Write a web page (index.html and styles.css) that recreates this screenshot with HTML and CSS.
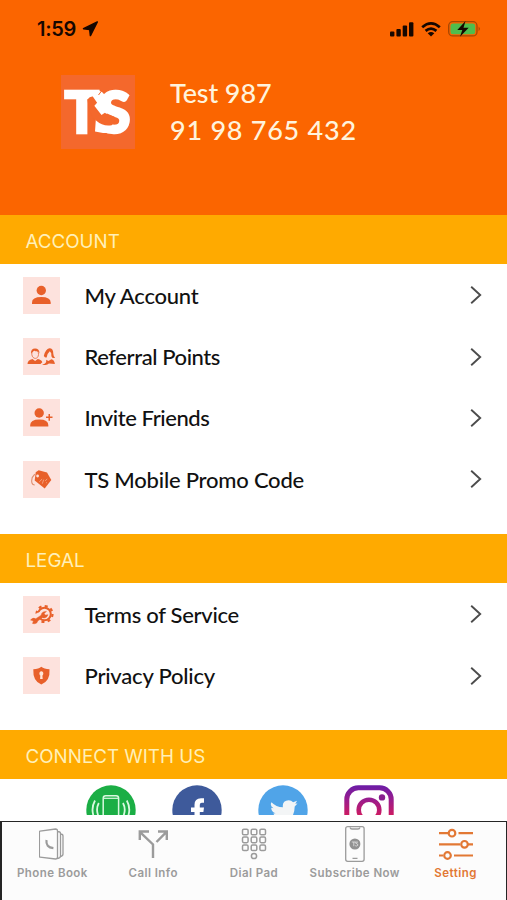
FILE: index.html
```
<!DOCTYPE html>
<html lang="en">
  <head>
    <meta charset="UTF-8">
    <meta name="viewport" content="width=device-width, initial-scale=1.0">
    <title>Setting</title>
    <link rel="stylesheet" href="styles.css">
  </head>
<body>
  <div class="header">
    <div class="status">
      <div class="time">1:59
        <svg width="17" height="16" viewBox="0 0 17 16"><path d="M15.3 1 1.5 7.7l6.2.9.7 6z" fill="#160700" stroke="#160700" stroke-width="1.5" stroke-linejoin="round"/></svg>
      </div>
      <div class="status-icons">
        <svg width="24" height="15" viewBox="0 0 24 15" fill="#160700"><rect y="9.5" width="4.4" height="5" rx="1"/><rect x="6.4" y="7" width="4.4" height="7.5" rx="1"/><rect x="12.7" y="3.5" width="4.4" height="11" rx="1"/><rect x="19" y=".3" width="4.4" height="14.2" rx="1"/></svg>
        <svg width="20" height="15" viewBox="0 0 20 15" fill="none" stroke="#160700" stroke-width="2.7"><path d="M1.2 5.3q8.8-7.7 17.6 0M4.6 8.9q5.4-4.6 10.8 0"/><path d="M6.7 11.2q3.3-2.5 6.6 0L10 14.6z" fill="#160700" stroke="none"/></svg>
        <svg width="33" height="16" viewBox="0 0 33 16"><rect x=".7" y=".7" width="28.3" height="14.2" rx="4" fill="none" stroke="#a64700" stroke-width="1.3"/><rect x="2.5" y="2.4" width="24.7" height="10.9" rx="2.5" fill="#4fbd4c"/><path d="M30.6 5.4q2.6 2.4 0 4.8z" fill="#a64700"/><path d="M17.5 0 9.3 9h5l-2.3 6.7L20.7 6.8h-5.2z" fill="#160700"/></svg>
      </div>
    </div>
    <div class="profile">
      <svg class="logo" width="74" height="74" viewBox="0 0 74 74">
        <rect width="74" height="74" fill="#f4682c"/>
        <text class="logo-text" x="3.5" y="57.5" textLength="66" lengthAdjust="spacingAndGlyphs">TS</text>
        <path d="M28 15.500h10l3 1.500 6 6-.5 13-6 4-7-9-6-6zM35 42l14 5-3 11h-4l-8-1.500z" fill="#fff"/>
        <path d="M26.500 24.500q2.200-3.200 5.300-2.900l4.300 6.200-3.400 3.700q3.300 6.600 9.600 9.800l3.700-2.800 7.400 3.200q1 5-2.700 8.500-8.300 1.800-15.700-4.700-7.500-6.800-8.500-21z" fill="#f4682c"/>
        <path d="M29.500 40v20h4.500V46z" fill="#f4682c"/>
        <path d="m37.500 20 3-4" stroke="#f4682c" stroke-width="1"/>
      </svg>
      <div class="user">
        <div class="name">Test 987</div>
        <div class="phone">91 98 765 432</div>
      </div>
    </div>
  </div>

  <div class="content">
    <h2>ACCOUNT</h2>
    <div class="list">
      <div class="row">
        <svg class="icon" viewBox="0 0 37 37"><circle cx="18.3" cy="13.5" r="4.7"/><path d="M9 27v-1.5q0-5.5 9.3-5.5t9.4 5.5V27z"/></svg>
        <span class="my-account">My Account</span>
        <svg class="arrow" viewBox="0 0 12 18"><path d="m1.2.8 9 8.2-9 8.2"/></svg>
      </div>
      <div class="row">
        <svg class="icon" viewBox="0 0 37 37">
          <path d="M4.5 26q0-3.8 5-5l2.6 2 2.7-2q3.8.8 4.5 3.2L17.5 26z"/>
          <path d="M8.8 16.5c-.8-6 7.3-6.1 6.7 0-.3 5.2-6 5.2-6.7 0z" fill="none" stroke="#e2683a" stroke-width=".8"/>
          <path d="M8 15.5q-.2-5 4.1-5t4.4 5l-1.6-2.2q-2.6.3-3.6-.8z"/>
          <path d="M19 26.5q5-.6 4.2-4.8l2.2 1.4 3-1.8q3 .7 3.5 4.7l-6-.4q-2 2.4-6.9.9z"/>
          <path d="M20.8 18q1.9-7.3 5.5-7.7 4 0 4 5.4.2 3.2 1.8 4.2-3 .7-3.7-1.7.5-3.5-1.6-4.9-2.9 2.6-3.2 6.1-1.3.6-2.8-1.4z"/>
        </svg>
        <span class="referral">Referral Points</span>
        <svg class="arrow" viewBox="0 0 12 18"><path d="m1.2.8 9 8.2-9 8.2"/></svg>
      </div>
      <div class="row">
        <svg class="icon" viewBox="0 0 37 37"><circle cx="16.2" cy="14" r="4.7"/><path d="M7.2 27.5V26q0-5.6 9.1-5.6t9 5.6v1.5zM25.500 15v2.500H23v1.500h2.500v2.700H27V19h2.500v-1.500H27V15z"/></svg>
        <span class="invite">Invite Friends</span>
        <svg class="arrow" viewBox="0 0 12 18"><path d="m1.2.8 9 8.2-9 8.2"/></svg>
      </div>
      <div class="row">
        <svg class="icon" viewBox="0 0 37 37">
          <path d="m12.7 11.2 3-2 8.300 2.200 4.300 7.700-6.600 8.500-10-8.200z"/>
          <path d="m11.8 13.1-2.6 3.5q-1.8 7.2 2.5 7.4" fill="none" stroke="#df8e6e" stroke-width="1.1"/>
          <circle cx="14.6" cy="15" r="1.4" fill="#fde2dd"/>
          <path d="m16.3 20.8 2.8-2.7m.2 4.6 1.4-4.1m1.5 1.2 2-1.8m-1.1 3.5.8.4" fill="none" stroke="#f7ae91" stroke-width=".8"/>
        </svg>
        <span class="promo">TS Mobile Promo Code</span>
        <svg class="arrow" viewBox="0 0 12 18"><path d="m1.2.8 9 8.2-9 8.2"/></svg>
      </div>
    </div>

    <h2>LEGAL</h2>
    <div class="list">
      <div class="row">
        <svg class="icon" viewBox="0 0 37 37">
          <circle cx="21.5" cy="18" r="6.3" fill="none" stroke="#e8602a" stroke-width="2"/>
          <circle cx="21.5" cy="18" r="8" fill="none" stroke="#e8602a" stroke-width="2.2" stroke-dasharray="3 3.28"/>
          <path d="m11 18.5 7-3v7l-6.5 6z" fill="#fde2dd"/>
          <path d="m9.5 27.5.9-2.5-2.9-1q2.3-3 5.3-1.3l5.3-3.5q.3-4 5.4-3.8l-2.3 2.1 1 1.6 2.8-.4q-1.6 4.2-5.6 3l-4.7 3.3q-.7 3.500-5.200 2.500z" stroke="#e8602a" stroke-width=".4"/>
        </svg>
        <span class="terms">Terms of Service</span>
        <svg class="arrow" viewBox="0 0 12 18"><path d="m1.2.8 9 8.2-9 8.2"/></svg>
      </div>
      <div class="row">
        <svg class="icon" viewBox="0 0 37 37"><path d="M10.3 12.2q5.5 0 8-2.4 2.8 2.4 8.2 2.4.9 11.8-8.2 15.2-8.6-3.2-8-15.2z"/><path d="M16.5 17a2 2 0 1 1 3.7 0q0 1-.8 1.6l.3 3.300h-2.600l.2-3.300q-.8-.6-.8-1.600z" fill="#ffe5d8"/></svg>
        <span class="privacy">Privacy Policy</span>
        <svg class="arrow" viewBox="0 0 12 18"><path d="m1.2.8 9 8.2-9 8.2"/></svg>
      </div>
    </div>

    <h2>CONNECT WITH US</h2>
    <div class="social">
      <svg viewBox="0 0 50 50"><circle cx="25" cy="25" r="24.7" fill="#1bae45"/><g fill="none" stroke="#d9f8df" stroke-width="1.5"><rect x="17.2" y="10.7" width="15.4" height="29" rx="2.5"/><path d="M17.5 13.3h15" stroke-width="1.2"/><path d="M12.8 18q-3.5 6.5 0 14M9 15.5q-5 9 0 19M37 18q3.5 6.5 0 14M40.8 15.5q5 9 0 19" stroke-width="1.8"/></g></svg>
      <svg viewBox="0 0 50 50"><circle cx="25" cy="25" r="24.7" fill="#3e5a9b"/><path d="M22.500 40V27H19v-4.600h3.500v-2.600q0-6.600 6.500-6.600h3v4.600h-2.200q-2 0-2 2v2.600H32l-.6 4.600h-3.600v13z" fill="#fff"/></svg>
      <svg viewBox="0 0 50 50"><circle cx="25" cy="25" r="24.7" fill="#50a4e8"/><path d="M13.5 17.3q4.500 4.900 11.400 5-1-6.700 5.800-7 2.700 0 4.400 1.900l4-1.500-1.800 3.100 2.200-.4-2.800 3Q36.500 37 22 37q-5 0-9-2.400 5 0 7.500-2.400-3.900-.3-5.100-3.700l2.200-.2q-4.200-1.300-4.400-5.500l2.300.5q-4-2.800-2-6z" fill="#f3f5f6"/></svg>
      <svg viewBox="0 0 50 50"><defs><linearGradient id="insta" x1="0" y1="0" x2="0" y2="50" gradientUnits="userSpaceOnUse"><stop offset=".03" stop-color="#6e1ca5"/><stop offset=".3" stop-color="#9b1c8c"/><stop offset=".65" stop-color="#d41b5b"/><stop offset="1" stop-color="#f57a38"/></linearGradient></defs><rect x="2.8" y="2.8" width="44.4" height="44.4" rx="11.5" fill="none" stroke="url(#insta)" stroke-width="5"/><circle cx="25" cy="25" r="10.3" fill="none" stroke="url(#insta)" stroke-width="4.6"/><circle cx="38" cy="12.4" r="3.2" fill="#87208d"/></svg>
    </div>
  </div>

  <div class="tabs">
    <div class="tab">
      <svg width="26" height="36" viewBox="0 0 26 36"><path d="M1 5.2 16.5 3q2 0 2 2v26q0 2-2 2L1 31.2q-.6 0-.6-1V6.2q0-.9.6-1zM18.5 5.5q3 0 3 2v22.5q0 2-3 2.5M21.5 8q2.5 0 2.5 2v18q0 2-2.5 2.5"/><path d="M7.5 14q-1 7.400 6.900 8.200" stroke-width="2.2"/></svg>
      Phone Book
    </div>
    <div class="tab">
      <svg class="call-info" width="30" height="36" viewBox="0 0 30 36"><path d="M15 32V18.5L1.800 5.800M1.800 14V5.500H11M20 5.500h8.800V14M28.500 5.800 18.500 16"/></svg>
      Call Info
    </div>
    <div class="tab">
      <svg class="dial-pad" width="26" height="36" viewBox="0 0 26 36"><g id="keys"><rect x="1.500" y="3.200" width="5.600" height="5.600" rx="1.400"/><rect x="10.200" y="3.200" width="5.600" height="5.600" rx="1.400"/><rect x="18.900" y="3.200" width="5.600" height="5.600" rx="1.400"/></g><use href="#keys" y="7.900"/><use href="#keys" y="15.800"/><circle cx="13" cy="30" r="2.600"/></svg>
      Dial Pad
    </div>
    <div class="tab">
      <svg width="22" height="36" viewBox="0 0 22 36"><rect x="1.700" y=".7" width="18.400" height="34.600" rx="2"/><path d="M6 1.500q.5 1.500 2 1.500h6q1.500 0 2-1.500M8.500 32.300h5"/><circle cx="10.900" cy="18" r="5.500" fill="#929292" stroke="none"/><path d="M7.800 16h4m-2 0v4.200m4.200-4q-2.500-.8-2.500.9 3 .8 2.300 2.200-1 1.200-2.600.4" stroke="#e5e5e5" stroke-width=".8"/></svg>
      Subscribe Now
    </div>
    <div class="tab active">
      <svg class="sliders" width="36" height="36" viewBox="0 0 36 36"><path d="M1 7.200h9M20.500 7.200H35M1 18.300h21M30 18.300h5M1 29.500h4M16 29.500h19"/><circle cx="14" cy="7.200" r="3.300"/><circle cx="26.500" cy="18.300" r="3.300"/><circle cx="9.500" cy="29.500" r="3.300"/></svg>
      Setting
    </div>
  </div>
</body>
</html>
```
FILE: styles.css
```
* {
  box-sizing: border-box;
}
body {
  margin: 0;
  height: 100vh;
  display: flex;
  flex-direction: column;
  overflow: hidden;
  background: #fff;
  font-family: Lato, "Liberation Sans", sans-serif;
}
svg {
  display: block;
  flex-shrink: 0;
}
.header {
  height: 215px;
  flex-shrink: 0;
  background: #fb6500;
}
.status {
  display: flex;
  justify-content: space-between;
  padding: 18px 26px 0 37px;
  height: 75px;
}
.time {
  display: flex;
  gap: 6px;
  height: 22px;
  align-items: center;
  color: #160700;
  font: 600 20px/22px Inter, sans-serif;
  letter-spacing: -0.3px;
}
.status-icons {
  display: flex;
  gap: 7px;
  height: 22px;
  align-items: center;
}
.profile {
  display: flex;
  padding-left: 61px;
}
.logo {
  overflow: visible;
}
.logo-text {
  font: 900 57px Lato, sans-serif;
  fill: #fff;
  stroke: #fff;
  stroke-width: 2.5px;
}
.user {
  margin: -1px 0 0 35px;
  color: #fff3dc;
  font-size: 27px;
  font-weight: 500;
  line-height: 37px;
  white-space: nowrap;
}
.name {
  letter-spacing: -0.1px;
}
.phone {
  letter-spacing: 0.75px;
}
.content {
  height: 599.5px;
  flex-shrink: 0;
  overflow: hidden;
}
h2 {
  margin: 0;
  height: 49px;
  padding: 3px 25.5px 0;
  background: #ffaa00;
  color: #fff0b8;
  font: 400 18.8px/47px Inter, sans-serif;
}
.list {
  padding: 0.5px 0 24px;
}
.row {
  display: flex;
  align-items: center;
  height: 61.4px;
  padding: 0 25px 0 23px;
  color: #111;
  font-size: 22px;
  font-weight: 500;
}
.row span {
  flex: 1;
  margin-left: 24.5px;
  white-space: nowrap;
}
.my-account,
.promo,
.privacy {
  letter-spacing: -0.22px;
}
.referral,
.invite {
  letter-spacing: -0.42px;
}
.terms {
  letter-spacing: -0.28px;
}
.icon {
  width: 37px;
  height: 37px;
  background: #fde2dd;
  fill: #e8602a;
}
.arrow {
  width: 12px;
  height: 18px;
  fill: none;
  stroke: #4c4c4c;
  stroke-width: 1.9;
}
.social {
  display: flex;
  gap: 36px;
  padding: 5.5px 0 0 86px;
}
.social svg {
  width: 50px;
  height: 50px;
}
.tabs {
  display: flex;
  margin-top: auto;
  height: 79px;
  padding-top: 4px;
  background: #fcfcfc;
  border: solid #252525;
  border-width: 1.5px 1px 0 2px;
}
.tab {
  flex: 1 0 0;
  display: flex;
  flex-direction: column;
  align-items: center;
  gap: 1px;
  color: #9b9b9b;
  font: 600 11.5px/20px Inter, sans-serif;
  letter-spacing: 0.45px;
  white-space: nowrap;
}
.tab svg {
  fill: none;
  stroke: currentColor;
  stroke-width: 1.3;
}
.tab .dial-pad {
  stroke-width: 1.5;
}
.tab .sliders {
  stroke-width: 2.2;
}
.tab .call-info {
  stroke-width: 2.4;
}
.tab.active {
  color: #e27834;
}
```
